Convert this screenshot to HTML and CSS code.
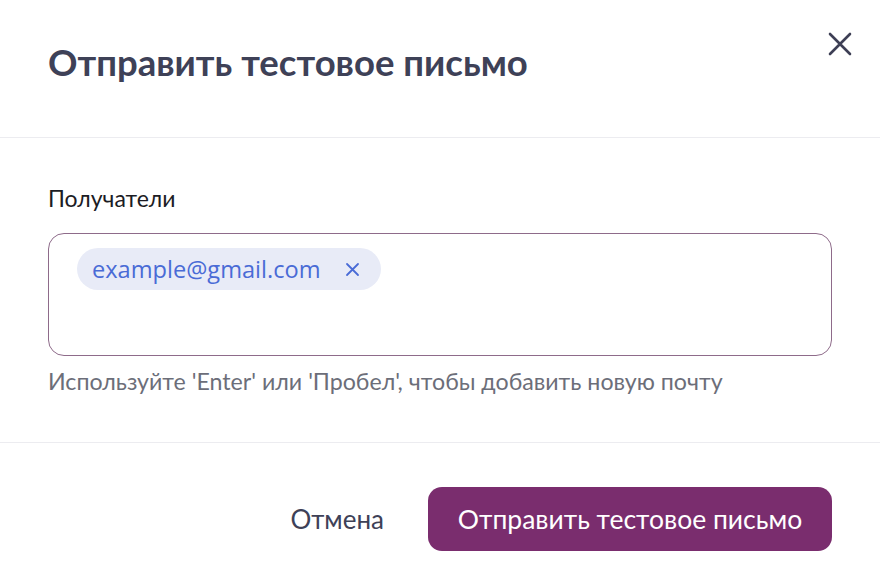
FILE: index.html
```html
<!DOCTYPE html>
<html lang="ru">
<head>
<meta charset="utf-8">
<link rel="stylesheet" href="styles.css">
</head>
<body>
<div class="modal">
  <header class="modal-header">
    <h1 class="title">Отправить тестовое письмо</h1>
    <button class="close" aria-label="Закрыть">
      <svg width="24" height="24" viewBox="0 0 24 24"><path d="M2 2L22 22M22 2L2 22" stroke="#3d3f55" stroke-width="2.6" stroke-linecap="round"/></svg>
    </button>
  </header>
  <section class="modal-body">
    <label class="label">Получатели</label>
    <div class="tag-input">
      <span class="chip">example@gmail.com
        <svg class="chip-x" width="15" height="15" viewBox="0 0 15 15"><path d="M2 2L13 13M13 2L2 13" stroke="#4a6bd6" stroke-width="1.8" stroke-linecap="round"/></svg>
      </span>
    </div>
    <p class="hint">Используйте 'Enter' или 'Пробел', чтобы добавить новую почту</p>
  </section>
  <footer class="modal-footer">
    <button class="btn-cancel">Отмена</button>
    <button class="btn-primary">Отправить тестовое письмо</button>
  </footer>
</div>
</body>
</html>
```

FILE: styles.css
```css
* { box-sizing: border-box; }
html, body { margin: 0; padding: 0; background: #fff; }
body { font-family: "Lato", "Noto Sans", sans-serif; color: #3e4157; }
.modal { width: 880px; height: 582px; display: flex; flex-direction: column; }
.modal-header {
  height: 138px;
  border-bottom: 1px solid #ececf0;
  display: flex;
  justify-content: space-between;
  align-items: flex-start;
  padding: 0 28px 0 48px;
}
.title {
  margin: 40px 0 0;
  font-size: 36.5px;
  line-height: 44px;
  font-weight: 700;
  color: #3e4157;
}
.close {
  margin-top: 32px;
  background: none;
  border: 0;
  padding: 0;
  width: 24px;
  height: 24px;
  cursor: pointer;
}
.modal-body {
  height: 305px;
  border-bottom: 1px solid #ececf0;
  padding: 46px 48px 0;
  display: flex;
  flex-direction: column;
}
.label {
  font-size: 23px;
  color: #1c1c24;
  line-height: 28px;
  margin-bottom: 21px;
}
.tag-input {
  height: 123px;
  border: 1px solid #8e6b8a;
  border-radius: 16px;
  padding: 14px 28px;
}
.chip {
  display: inline-flex;
  align-items: center;
  gap: 24px;
  height: 42px;
  padding: 0 21px 0 15px;
  border-radius: 21px;
  background: #e8ebf7;
  color: #4a6bd6;
  font-family: "Open Sans", "Lato", sans-serif;
  font-size: 23.6px;
}
.hint {
  margin: 11px 0 0;
  font-size: 23.2px;
  color: #6c6e79;
  line-height: 28px;
}
.modal-footer {
  flex: 1;
  display: flex;
  justify-content: flex-end;
  align-items: flex-start;
  padding: 44px 48px 0;
  gap: 44px;
}
.btn-cancel {
  background: none;
  border: 0;
  font-family: inherit;
  font-size: 26px;
  color: #3e4157;
  height: 64px;
  padding: 0;
  cursor: pointer;
}
.btn-primary {
  height: 64px;
  width: 404px;
  background: #7a2d6e;
  border: 0;
  border-radius: 14px;
  color: #fff;
  font-family: inherit;
  font-size: 26.5px;
  cursor: pointer;
}
```
